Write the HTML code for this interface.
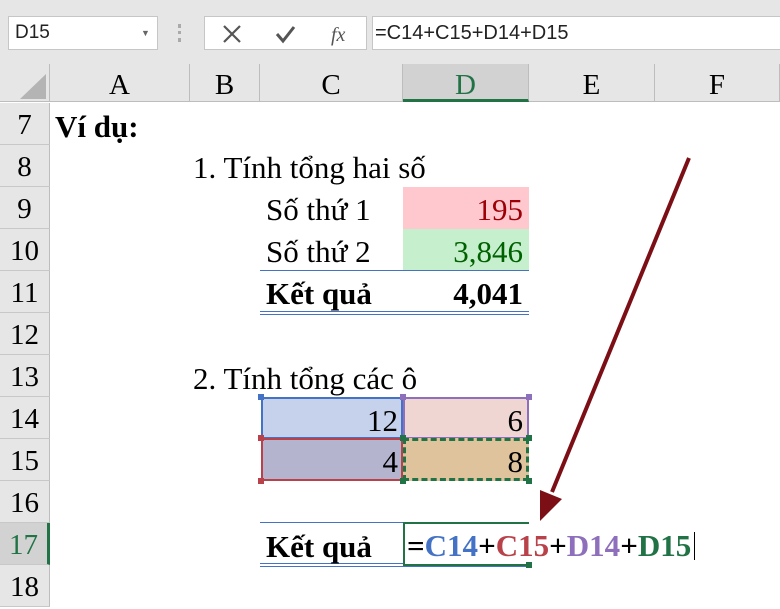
<!DOCTYPE html>
<html><head><style>
body{margin:0;width:780px;height:606px;overflow:hidden;background:#fff;font-family:"Liberation Serif",serif;position:relative}
.a{position:absolute}
.t{position:absolute;font-size:31px;line-height:42px;white-space:nowrap;color:#000}
.ch{position:absolute;top:64px;height:38px;line-height:42px;text-align:center;font-size:29px;background:#e6e6e6;border-right:1px solid #bdbdbd;box-sizing:border-box;border-bottom:1px solid #bdbdbd}
.rh{position:absolute;left:0;width:50px;height:42px;line-height:44px;text-align:center;font-size:29px;background:#e6e6e6;border-bottom:1px solid #c8c8c8;border-right:1px solid #bdbdbd;box-sizing:border-box}
.r{text-align:right}
.h{position:absolute;width:6px;height:6px}
</style></head><body>
<div class="a" style="left:0;top:0;width:780px;height:64px;background:#e6e6e6"></div>
<div class="a" style="left:8px;top:16px;width:150px;height:34px;background:#fff;border:1px solid #c6c6c6;box-sizing:border-box;font-family:'Liberation Sans',sans-serif;font-size:19px;line-height:32px;padding-left:6px;color:#222">D15<span style="position:absolute;left:132px;top:0;font-size:9px;color:#666">▼</span></div>
<div class="a" style="left:178px;top:24px;width:3px;height:18px;border-left:3px dotted #aaa"></div>
<div class="a" style="left:204px;top:16px;width:163px;height:34px;background:#fff;border:1px solid #c6c6c6;box-sizing:border-box"></div>
<svg class="a" style="left:220px;top:22px" width="140" height="24"><path d="M4 4L20 20M20 4L4 20" stroke="#555" stroke-width="2.2"/><path d="M57 12l6 7 11-14" stroke="#555" stroke-width="3" fill="none"/><text x="111" y="19" font-family="Liberation Serif" font-style="italic" font-size="20" fill="#555">fx</text></svg>
<div class="a" style="left:372px;top:16px;width:408px;height:34px;background:#fff;border:1px solid #c6c6c6;border-right:none;box-sizing:border-box;font-family:'Liberation Sans',sans-serif;font-size:20px;line-height:32px;padding-left:2px;color:#222">=C14+C15+D14+D15</div>
<div class="a" style="left:0;top:64px;width:50px;height:38px;background:#e6e6e6;border-right:1px solid #bdbdbd;border-bottom:1px solid #bdbdbd;box-sizing:border-box"></div>
<svg class="a" style="left:18px;top:72px" width="30" height="28"><path d="M28 2V27H2Z" fill="#b4b4b4"/></svg>
<div class="ch" style="left:50px;width:140px">A</div>
<div class="ch" style="left:190px;width:70px">B</div>
<div class="ch" style="left:260px;width:143px">C</div>
<div class="ch" style="left:403px;width:126px;background:#d2d2d2;color:#217346;border-bottom:3px solid #217346">D</div>
<div class="ch" style="left:529px;width:126px">E</div>
<div class="ch" style="left:655px;width:125px">F</div>
<div class="rh" style="top:103px">7</div>
<div class="rh" style="top:145px">8</div>
<div class="rh" style="top:187px">9</div>
<div class="rh" style="top:229px">10</div>
<div class="rh" style="top:271px">11</div>
<div class="rh" style="top:313px">12</div>
<div class="rh" style="top:355px">13</div>
<div class="rh" style="top:397px">14</div>
<div class="rh" style="top:439px">15</div>
<div class="rh" style="top:481px">16</div>
<div class="rh" style="top:523px;background:#d2d2d2;color:#217346;border-right:3px solid #217346">17</div>
<div class="rh" style="top:565px">18</div>
<div class="t" style="left:55px;top:106px;font-weight:bold">Ví dụ:</div>
<div class="t" style="left:193px;top:147px">1. Tính tổng hai số</div>
<div class="a" style="left:403px;top:187px;width:126px;height:42px;background:#ffc7ce"></div>
<div class="a" style="left:403px;top:229px;width:126px;height:42px;background:#c6efce"></div>
<div class="t" style="left:266px;top:189px">Số thứ 1</div>
<div class="t r" style="left:403px;width:120px;top:189px;color:#9c0006">195</div>
<div class="t" style="left:266px;top:231px">Số thứ 2</div>
<div class="t r" style="left:403px;width:120px;top:231px;color:#006100">3,846</div>
<div class="a" style="left:260px;top:270px;width:269px;height:1px;background:#4472c4"></div>
<div class="t" style="left:266px;top:273px;font-weight:bold">Kết quả</div>
<div class="t r" style="left:403px;width:120px;top:273px;font-weight:bold">4,041</div>
<div class="a" style="left:260px;top:311px;width:269px;height:1px;background:#4472c4"></div>
<div class="a" style="left:260px;top:314px;width:269px;height:1px;background:#4472c4"></div>
<div class="t" style="left:193px;top:358px">2. Tính tổng các ô</div>
<div class="a" style="left:261px;top:397px;width:142px;height:42px;background:#c6d2ec;border:2px solid #4472c4;box-sizing:border-box"></div>
<div class="a" style="left:403px;top:397px;width:126px;height:42px;background:#f0d6d2;border:2px solid #8e6fbc;box-sizing:border-box"></div>
<div class="a" style="left:261px;top:438px;width:142px;height:43px;background:#b4b4cf;border:2px solid #b9424a;box-sizing:border-box"></div>
<div class="a" style="left:403px;top:438px;width:126px;height:43px;background:#dfc39c;border:3px dashed #217346;box-sizing:border-box"></div>
<div class="t r" style="left:261px;width:137px;top:400px">12</div>
<div class="t r" style="left:403px;width:120px;top:400px">6</div>
<div class="t r" style="left:261px;width:137px;top:441px">4</div>
<div class="t r" style="left:403px;width:120px;top:441px">8</div>
<div class="h" style="left:258px;top:394px;background:#4472c4"></div>
<div class="h" style="left:400px;top:394px;background:#8e6fbc"></div>
<div class="h" style="left:526px;top:394px;background:#8e6fbc"></div>
<div class="h" style="left:258px;top:435px;background:#b9424a"></div>
<div class="h" style="left:400px;top:435px;background:#217346"></div>
<div class="h" style="left:526px;top:435px;background:#217346"></div>
<div class="h" style="left:258px;top:478px;background:#b9424a"></div>
<div class="h" style="left:400px;top:478px;background:#217346"></div>
<div class="h" style="left:526px;top:478px;background:#217346"></div>
<div class="a" style="left:260px;top:522px;width:269px;height:1px;background:#4472c4"></div>
<div class="a" style="left:260px;top:563px;width:269px;height:1px;background:#4472c4"></div>
<div class="a" style="left:260px;top:566px;width:269px;height:1px;background:#4472c4"></div>
<div class="a" style="left:403px;top:522px;width:126px;height:44px;border:2px solid #217346;border-right:none;box-sizing:border-box;background:#fff"></div>
<div class="h" style="left:526px;top:562px;background:#217346"></div>
<div class="t" style="left:266px;top:526px;font-weight:bold">Kết quả</div>
<div class="t" style="left:407px;top:525px;font-weight:bold">=<span style="color:#4472c4">C14</span>+<span style="color:#b9424a">C15</span>+<span style="color:#8e6fbc">D14</span>+<span style="color:#217346">D15</span></div>
<div class="a" style="left:694px;top:532px;width:1px;height:28px;background:#000"></div>
<svg class="a" style="left:0;top:0" width="780" height="606"><line x1="689" y1="158" x2="552" y2="492" stroke="#7b0f15" stroke-width="4"/><path d="M540 521L540 490L562 499Z" fill="#7b0f15"/></svg>
</body></html>
